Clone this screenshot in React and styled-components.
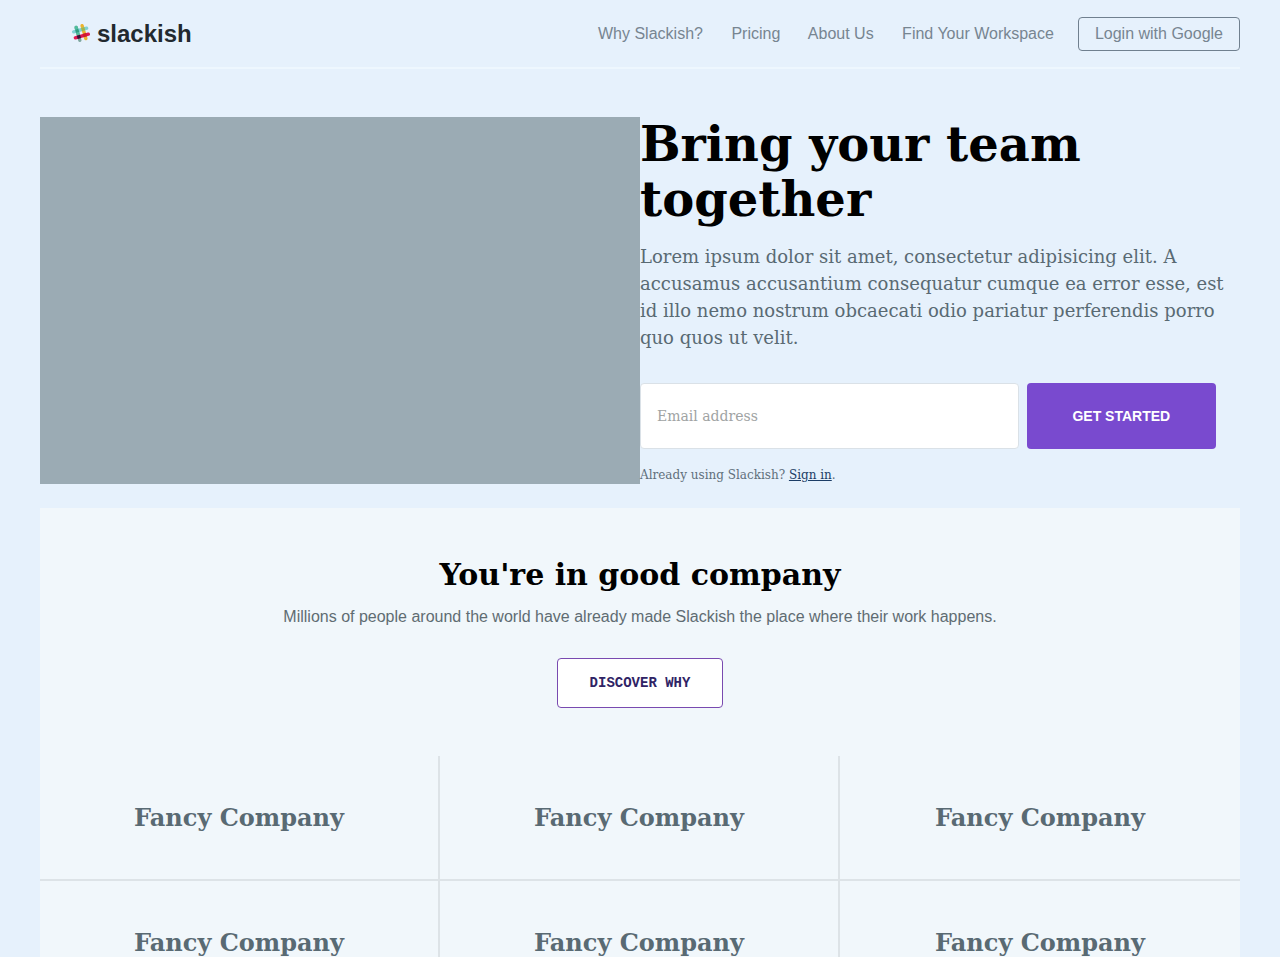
import React, {useState} from "react"
import styled, {createGlobalStyle} from "styled-components"

const sans = '"Liberation Sans", Arial, sans-serif'
const serif = '"DejaVu Serif", serif'
const mono = '"Liberation Mono", monospace'

const GlobalStyle = createGlobalStyle`
  *, *::before, *::after {
    box-sizing: border-box;
  }

  body {
    margin: 0;
    background-color: #e6f1fc;
    color: #000;
    font-family: ${serif};
  }

  h1, h2, p, ul {
    margin: 0;
    padding: 0;
  }
`

const Page = styled.div`
  padding: 0 40px;
`

const Header = styled.header`
  display: flex;
  align-items: center;
  justify-content: space-between;
  padding: 17px 0 16px 32px;
  border-bottom: 2px solid #eef7fe;
  font-family: ${sans};
`

const Brand = styled.a`
  display: flex;
  align-items: center;
  gap: 7px;
  color: #22292f;
  font-size: 24px;
  font-weight: bold;
  line-height: 28px;
  text-decoration: none;

  svg {
    display: block;
  }
`

const Nav = styled.nav`
  font-size: 16px;
  line-height: 18px;
`

const NavLink = styled.a`
  margin-right: 24px;
  color: #778591;
  text-decoration: none;

  &:hover {
    color: #22292f;
  }
`

const Actions = styled.div`
  display: flex;
  align-items: center;
`

const LoginButton = styled.button`
  padding: 7px 16px;
  border: 1px solid #70808f;
  border-radius: 4px;
  background: transparent;
  color: #778591;
  font-family: ${sans};
  font-size: 16px;
  line-height: 18px;
  cursor: pointer;
`

const Hero = styled.section`
  display: grid;
  grid-template-columns: 1fr 1fr;
  padding: 48px 0 24px;
`

const Media = styled.div`
  background-color: #9babb4;
`

const Title = styled.h1`
  margin-bottom: 16px;
  font-size: 48px;
  line-height: 55px;
`

const Lead = styled.p`
  margin-bottom: 32px;
  color: #596a73;
  font-size: 18px;
  line-height: 27px;
`

const SignupForm = styled.form`
  display: grid;
  grid-template-columns: 2fr 1fr;
  gap: 8px;
  margin: 0 24px 17px 0;
`

const EmailInput = styled.input`
  min-width: 0;
  height: 66px;
  padding: 0 16px;
  border: 1px solid #dae1e7;
  border-radius: 4px;
  background-color: #fff;
  font-family: ${serif};
  font-size: 14px;

  &::placeholder {
    color: #a0a3a3;
  }
`

const SubmitButton = styled.button`
  border: 0;
  border-radius: 4px;
  background-color: #794acf;
  color: #fff;
  font-family: ${sans};
  font-size: 14px;
  font-weight: bold;
  text-transform: uppercase;
  cursor: pointer;
`

const Hint = styled.p`
  color: #606f7b;
  font-size: 12px;
  line-height: 18px;

  a {
    color: #1c3d66;
  }
`

const Companies = styled.section`
  background-color: #f1f7fb;
`

const Intro = styled.div`
  display: flex;
  flex-direction: column;
  align-items: center;
  padding: 48px 0;
  text-align: center;
`

const Subtitle = styled.h2`
  margin-bottom: 14px;
  font-size: 30px;
  line-height: 38px;
`

const Tagline = styled.p`
  margin-bottom: 32px;
  color: #606c72;
  font-family: ${sans};
  font-size: 16px;
  line-height: 18px;
`

const DiscoverButton = styled.button`
  padding: 16px 32px;
  border: 1px solid #794ab0;
  border-radius: 4px;
  background-color: #fff;
  color: #2f2365;
  font-family: ${mono};
  font-size: 14px;
  font-weight: bold;
  line-height: 16px;
  text-transform: uppercase;
  cursor: pointer;
`

const Grid = styled.ul`
  display: grid;
  grid-template-columns: repeat(3, 1fr);
  list-style: none;
`

const Company = styled.li`
  padding: 48px 0;
  border-right: ${props => props.$last ? 0 : "2px solid #dde3e7"};
  border-bottom: 2px solid #dde3e7;
  color: #596a73;
  font-size: 24px;
  font-weight: bold;
  line-height: 27px;
  text-align: center;
`

const columns = 3
const links = ["Why Slackish?", "Pricing", "About Us", "Find Your Workspace"]
const companies = Array(6).fill("Fancy Company")

function Logo() {
  return (
    <svg width="18" height="20" viewBox="0 0 18 20" aria-hidden="true">
      <g transform="rotate(-16 9 9)">
        <rect x="4.2" y="0.6" width="3.4" height="16.8" rx="1.7" fill="#7fa8a0" />
        <rect x="4.2" y="0.6" width="3.4" height="10.4" rx="1.7" fill="#4fbd9c" />
        <rect x="10.4" y="0.6" width="3.4" height="16.8" rx="1.7" fill="#ecb32e" />
        <rect x="0.6" y="4.2" width="16.8" height="3.4" rx="1.7" fill="#7fd0d4" />
        <rect x="0.6" y="10.4" width="16.8" height="3.4" rx="1.7" fill="#e01550" />
        <rect x="4.2" y="4.2" width="3.4" height="3.4" fill="#2f9c80" />
        <rect x="10.4" y="4.2" width="3.4" height="3.4" fill="#a3b548" />
        <rect x="4.2" y="10.4" width="3.4" height="3.4" fill="#361238" />
        <rect x="10.4" y="10.4" width="3.4" height="3.4" fill="#cc2027" />
      </g>
    </svg>
  )
}

function Signup() {
  const [email, setEmail] = useState("")

  return (
    <SignupForm onSubmit={e => e.preventDefault()}>
      <EmailInput
        type="email"
        aria-label="Email address"
        placeholder="Email address"
        value={email}
        onChange={e => setEmail(e.target.value)}
      />
      <SubmitButton type="submit">Get started</SubmitButton>
    </SignupForm>
  )
}

function App() {
  return (
    <Page>
      <GlobalStyle />
      <Header>
        <Brand href="#"><Logo />slackish</Brand>
        <Actions>
          <Nav>
            {links.map((link, i) => <React.Fragment key={link}>
              {i > 0 && " "}
              <NavLink href="#">{link}</NavLink>
            </React.Fragment>)}
          </Nav>
          <LoginButton type="button">Login with Google</LoginButton>
        </Actions>
      </Header>
      <Hero>
        <Media />
        <div>
          <Title>Bring your team together</Title>
          <Lead>
            Lorem ipsum dolor sit amet, consectetur adipisicing elit. A accusamus accusantium consequatur
            cumque ea error esse, est id illo nemo nostrum obcaecati odio pariatur perferendis porro quo
            quos ut velit.
          </Lead>
          <Signup />
          <Hint>Already using Slackish? <a href="#">Sign in</a>.</Hint>
        </div>
      </Hero>
      <Companies>
        <Intro>
          <Subtitle>You're in good company</Subtitle>
          <Tagline>Millions of people around the world have already made Slackish the place where their work happens.</Tagline>
          <DiscoverButton type="button">Discover why</DiscoverButton>
        </Intro>
        <Grid>
          {companies.map((name, i) => <Company key={i} $last={(i + 1) % columns === 0}>{name}</Company>)}
        </Grid>
      </Companies>
    </Page>
  )
}

export default App
